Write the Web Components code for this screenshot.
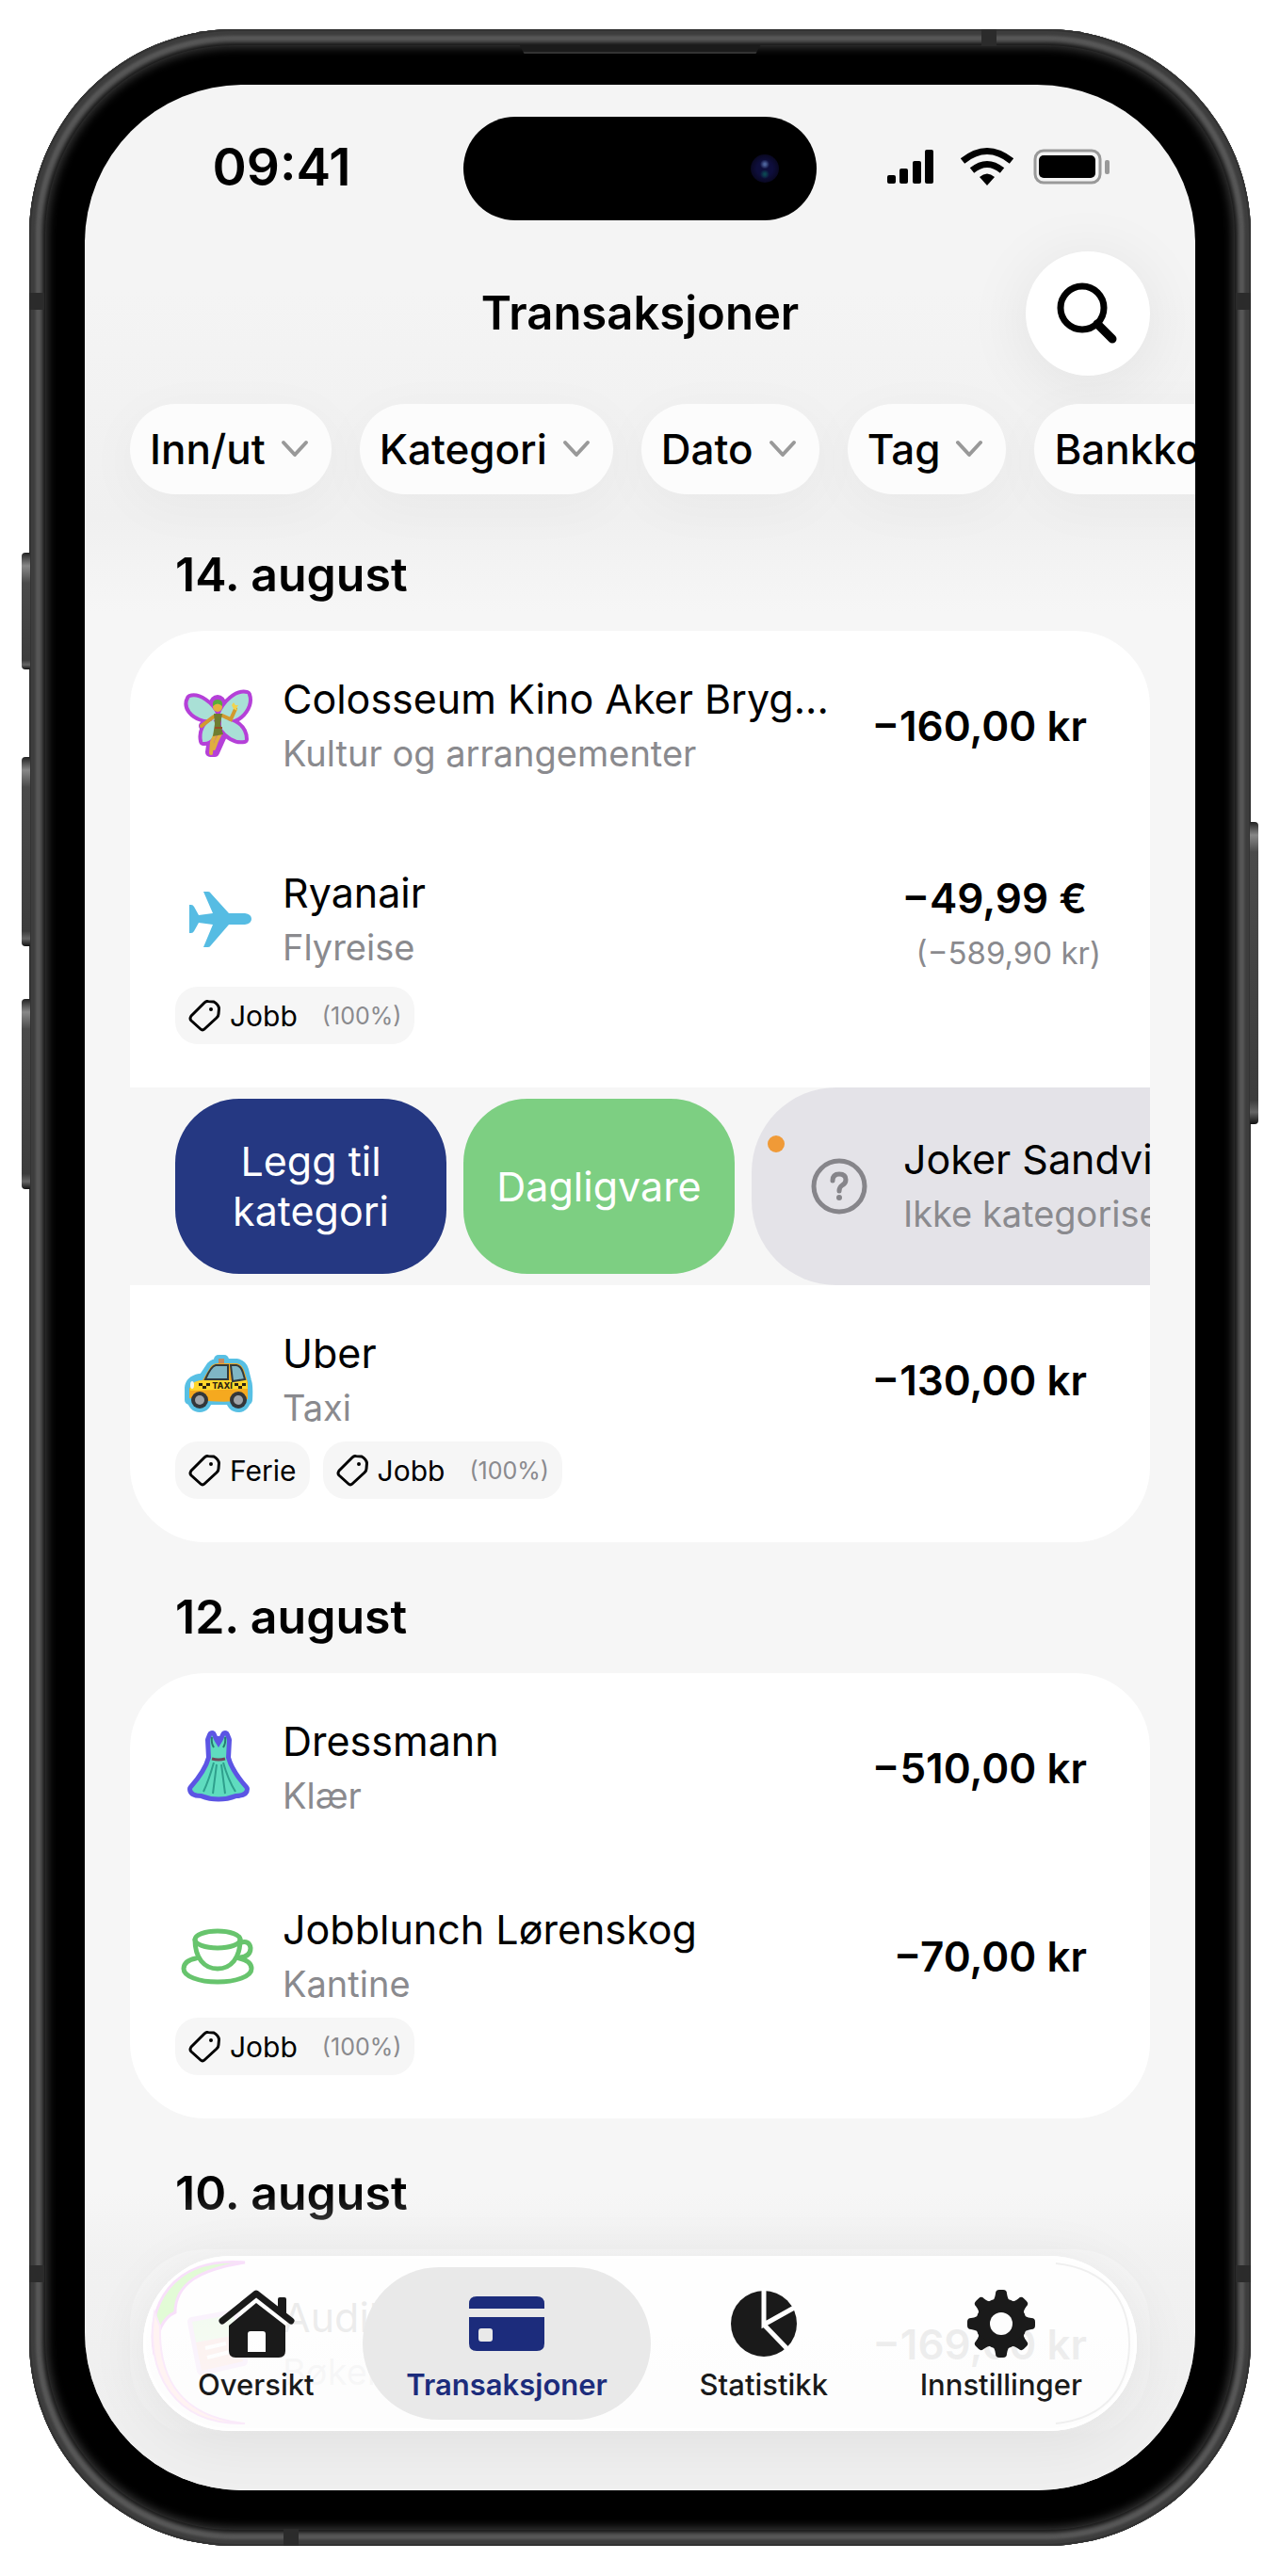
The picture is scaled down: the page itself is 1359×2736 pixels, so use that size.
<!DOCTYPE html>
<html lang="no">
<head>
<meta charset="utf-8">
<meta name="viewport" content="width=device-width, initial-scale=1">
<title>Transaksjoner</title>
<style>
	body {
		margin: 0;
		background: #fff;
		color: #000;
		font-family: Inter, "Liberation Sans", sans-serif;
	}
</style>
</head>
<body>
<phone-frame>
	<status-bar>09:41</status-bar>
	<nav-header>Transaksjoner</nav-header>
	<filter-bar>
		<filter-chip>Inn/ut</filter-chip>
		<filter-chip>Kategori</filter-chip>
		<filter-chip>Dato</filter-chip>
		<filter-chip>Tag</filter-chip>
		<filter-chip>Bankkonto</filter-chip>
	</filter-bar>

	<day-section day="14. august">
		<transaction-row icon="fairy" category="Kultur og arrangementer" amount="−160,00 kr">Colosseum Kino Aker Bryg...</transaction-row>
		<transaction-row icon="plane" category="Flyreise" amount="−49,99 €" converted="(−589,90 kr)">Ryanair
			<tag-chip slot="tags" share="(100%)">Jobb</tag-chip>
		</transaction-row>
		<swipe-row category="Ikke kategorisert">Joker Sandvika
			<swipe-action slot="actions" color="#253882">Legg til kategori</swipe-action>
			<swipe-action slot="actions" color="#7dcf82">Dagligvare</swipe-action>
		</swipe-row>
		<transaction-row icon="taxi" category="Taxi" amount="−130,00 kr">Uber
			<tag-chip slot="tags">Ferie</tag-chip>
			<tag-chip slot="tags" share="(100%)">Jobb</tag-chip>
		</transaction-row>
	</day-section>

	<day-section day="12. august">
		<transaction-row icon="dress" category="Klær" amount="−510,00 kr">Dressmann</transaction-row>
		<transaction-row icon="cup" category="Kantine" amount="−70,00 kr">Jobblunch Lørenskog
			<tag-chip slot="tags" share="(100%)">Jobb</tag-chip>
		</transaction-row>
	</day-section>

	<day-section day="10. august">
		<transaction-row icon="book" category="Bøker" amount="−169,00 kr">Audible</transaction-row>
	</day-section>

	<tab-bar slot="bar">
		<tab-item icon="house">Oversikt</tab-item>
		<tab-item icon="card" active>Transaksjoner</tab-item>
		<tab-item icon="pie">Statistikk</tab-item>
		<tab-item icon="gear">Innstillinger</tab-item>
	</tab-bar>
</phone-frame>

<script>
// sticker look: the silhouette is stroked first, then the drawing goes on top
const sticker = (color, silhouette, drawing) => `
	<g fill="${color}" stroke="${color}" stroke-width="10" stroke-linejoin="round" stroke-linecap="round">${silhouette}</g>
	${drawing}`;

const wings = `
	<path d="M39 31 C34 19 20 10 12 13 C7 22 15 31 27 34 L38 35Z"/>
	<path d="M44 31 C49 18 62 6 72 9 C76 20 66 33 55 35 L46 36Z"/>
	<path d="M36 37 C28 40 24 49 26 58 C34 59 38 49 40 42Z"/>
	<path d="M46 36 C58 37 69 44 69 56 C60 58 51 51 46 44Z"/>`;
const car = `<path d="M11 63 L11 50 Q12 42 22 40 L26 39 L34 27 Q37 24 42 24 L61 24 Q67 25 69 31 L72 43 Q74 46 73 63 Z"/>
	<rect x="42" y="20" width="6" height="5"/><circle cx="22" cy="63" r="8"/><circle cx="63" cy="63" r="8"/>`;
const gown = `<path d="M35 7 Q37 13 42 20 Q47 13 49 7 L51 12 L50 31 Q54 46 70 64 Q70 69 60 69 Q42 76 24 69 Q14 69 14 64 Q30 46 34 31 L33 12Z"/>`;

const icons = {
	fairy: sticker("#b540d8", wings + `<path d="M38 20 L45 20 L47 50 L38 70 L33 70 L36 48 Z"/><circle cx="41" cy="18" r="4"/><path d="M26 42 L36 36"/>`, `
		<g fill="#a9e0d6" stroke="#a9e0d6" stroke-width="2">${wings}</g>
		<path d="M37 32 L24 42 M46 31 L55 35 L60 24" fill="none" stroke="#d29a2e" stroke-width="4" stroke-linecap="round"/>
		<path d="M39 50 L35 59 L34 71 M44 50 L40 58 L37 66" fill="none" stroke="#e0ad3f" stroke-width="4" stroke-linecap="round"/>
		<path d="M37 29 L46 29 L44 40 L47 51 L36 53 L38 40 Z" fill="#6f7d31"/>
		<path d="M38 44 L46 44" stroke="#9a4d24" stroke-width="2"/>
		<circle cx="41" cy="22" r="5" fill="#e3b23f"/>
		<path d="M36 21 Q35 14 41 14 Q47 14 46 21 Q41 16 36 21Z" fill="#58ad3d"/>
		<path d="M58 17 l2 3 3 0 -2 3 1 3 -4 -2 -2 -4Z" fill="#f2d34c"/>`),
	plane: `<path fill="#56bce3" d="M26 12 L31 12 Q33 12 34 14 L53 35 L70 35 Q77 36 77 41 Q77 46 70 47 L53 47 L34 69 Q33 71 31 71 L26 71 L36 47 L21 45 L16 54 Q15 56 13 56 L11 56 L11 26 L13 26 Q15 26 16 28 L21 37 L36 35 Z"/>`,
	taxi: sticker("#58c0e4", car, `
		<rect x="42" y="19" width="6" height="5" fill="#c28a62"/>
		<path d="M11 61 L11 51 Q13 43 25 42 L34 27 Q37 24 42 24 L61 24 Q67 25 69 31 L73 44 L73 62 Q60 66 30 64Z" fill="#f5a91f"/>
		<path d="M12 49 Q15 42 26 42 L72 42 L73 51 L12 53Z" fill="#ffd62b"/>
		<path d="M28 41 Q34 27 39 26 L52 26 L52 41Z M55 26 L61 26 Q66 27 68 34 L70 41 L57 43Z" fill="#7fb6c5" stroke="#313a3e" stroke-width="2"/>
		<path d="M21 45h4v3h-4zM25 48h4v3h-4zM29 45h4v3h-4zM59 45h4v3h-4zM63 48h4v3h-4zM67 45h4v3h-4z" fill="#2c2412"/>
		<text x="46" y="51" text-anchor="middle" font-size="9" font-weight="800" fill="#2c2412">TAXI</text>
		<circle cx="22" cy="63" r="9" fill="#33363a"/><circle cx="63" cy="63" r="9" fill="#33363a"/>
		<circle cx="22" cy="63" r="5" fill="#a0a5aa"/><circle cx="63" cy="63" r="5" fill="#a0a5aa"/>
		<ellipse cx="14" cy="47" rx="2" ry="4" fill="#f6f6ee"/>`),
	dress: sticker("#5c55e4", gown, `
		<g fill="#5fdcbf">${gown}</g>
		<path d="M37 8 Q38 14 42 19 Q46 14 47 8Z" fill="#5c55e4"/>
		<path d="M35 9 Q34 15 37 20 M49 9 Q50 15 47 20" stroke="#267b70" stroke-width="2" fill="none"/>
		<path d="M35 32 Q42 34 49 32" stroke="#70485a" stroke-width="3" fill="none"/>
		<path d="M37 36 Q32 54 26 67 M40 38 L36 69 M45 38 L49 69 M47 36 Q52 54 60 67" stroke="#2fa08d" stroke-width="2" fill="none"/>`),
	cup: `<g fill="none" stroke="#67c46d" stroke-width="5" stroke-linecap="round">
		<ellipse cx="41" cy="24" rx="24" ry="9"/>
		<path d="M17 24 C17 44 27 55 41 55 C55 55 65 44 65 24"/>
		<path d="M66 27 Q75 25 76 33 Q76 42 65 43"/>
		<path d="M18 44 C8 46 5 50 5 55 C5 63 21 69 41 69 C61 69 77 63 77 55 C77 50 73 46 64 44"/></g>`,
	book: sticker("#c95fe8", `<path d="M14 18 L58 10 L68 60 L24 70Z"/>`, `
		<path d="M14 18 L58 10 L62 32 L18 40Z" fill="#6bd34a"/>
		<path d="M18 40 L62 32 L68 60 L24 70Z" fill="#e8543c"/>
		<path d="M28 46 L50 41 M30 56 L54 50" stroke="#fff" stroke-width="4"/>`),
	question: `<circle cx="42" cy="42" r="27" fill="none" stroke="#86858a" stroke-width="5"/>
		<path d="M35 36 Q35 29 42 29 Q49 29 49 35 Q49 39 45 41 Q42 43 42 47" fill="none" stroke="#86858a" stroke-width="5" stroke-linecap="round"/>
		<circle cx="42" cy="54" r="3" fill="#86858a"/>`,
	house: `<path d="M6 35 L42 6 L79 35" fill="none" stroke="currentColor" stroke-width="7" stroke-linecap="round" stroke-linejoin="round"/>
		<path d="M65 24 V12 Q65 10 67 10 H72 Q74 10 74 12 V31Z" fill="currentColor"/>
		<path fill-rule="evenodd" fill="currentColor" d="M42 16 L73 40 V67 Q73 74 66 74 H20 Q13 74 13 67 V40Z M33 68 H52 V49 Q52 46 49 46 H36 Q33 46 33 49Z"/>`,
	card: `<path d="M2 22 V17 Q2 9 10 9 H74 Q82 9 82 17 V22Z" fill="currentColor"/>
		<path fill-rule="evenodd" fill="currentColor" d="M2 31 H82 V59 Q82 67 74 67 H10 Q2 67 2 59Z M15 43 Q12 43 12 46 V54 Q12 57 15 57 H24 Q27 57 27 54 V46 Q27 43 24 43Z"/>`,
	pie: `<circle cx="42" cy="38" r="35" fill="currentColor"/>
		<path d="M42 0 V39 L76 20 M42 39 L69 67" fill="none" stroke="#fff" stroke-width="5"/>`,
	gear: `<g fill="currentColor"><circle cx="42" cy="38" r="27"/>
		${[0, 45, 90, 135, 180, 225, 270, 315].map(a => `<path d="M32 14 Q35 13 36 6 Q36 2 40 2 H44 Q48 2 48 6 Q49 13 52 14Z" transform="rotate(${a} 42 38)"/>`).join("")}</g>
		<circle cx="42" cy="38" r="12" fill="#fdfdfd"/>`,
};

const svg = (name, height = 84) =>
	`<svg width="84" height="${height}" viewBox="0 0 84 ${height}" aria-hidden="true">${icons[name] || ""}</svg>`;

// every element gets its shadow root filled once from render()
class BaseElement extends HTMLElement {
	constructor() {
		super();
		this.attachShadow({ mode: "open" });
	}
	connectedCallback() {
		this.shadowRoot.innerHTML = this.render();
	}
}

customElements.define("phone-frame", class extends BaseElement {
	render() {
		return `
		<style>
			:host { display: block; padding: 31px; }
			* { box-sizing: border-box; }
			.body {
				position: relative;
				height: calc(100vh - 63px);
				padding: 59px;
				border-radius: 218px;
				background: #000;
				box-shadow:
					inset 0 0 0 2px #333,
					inset 0 0 3px 7px #3d3d3d,
					inset 0 0 4px 14px #5a5a5a,
					inset 0 0 0 17px #161616,
					inset 0 0 10px 20px #343434;
			}
			.screen {
				position: relative;
				height: 100%;
				overflow: hidden;
				border-radius: 168px;
				background: linear-gradient(#f4f4f4, #f4f4f4 220px, #f0f0f0 460px, #f6f6f6 560px);
			}
			.key {
				position: absolute;
				width: 9px;
				left: -8px;
				border-radius: 4px 0 0 4px;
				background: linear-gradient(#222, #888 14px, #4a4a4a 32px, #3c3c3c 92%, #666 96%, #111);
			}
			.key.right { left: auto; right: -8px; border-radius: 0 4px 4px 0; }
			.band { position: absolute; background: #2b2b2b; width: 16px; height: 18px; }
			.ear {
				position: absolute; top: 17px; left: 50%; width: 256px; height: 9px; margin-left: -128px;
				background: #1b1b1b; border-bottom: 2px solid #333;
				clip-path: polygon(0 0, 100% 0, 98% 100%, 2% 100%);
			}
		</style>
		<div class="body">
			<i class="key" style="top:556px;height:124px"></i>
			<i class="key" style="top:773px;height:201px"></i>
			<i class="key" style="top:1030px;height:202px"></i>
			<i class="key right" style="top:842px;height:321px"></i>
			<i class="band" style="top:280px;left:0"></i>
			<i class="band" style="top:280px;right:0"></i>
			<i class="band" style="bottom:280px;left:0"></i>
			<i class="band" style="bottom:280px;right:0"></i>
			<i class="band" style="top:0;right:270px"></i>
			<i class="band" style="bottom:0;left:270px"></i>
			<i class="ear"></i>
			<main class="screen"><slot></slot><slot name="bar"></slot></main>
		</div>`;
	}
});

customElements.define("status-bar", class extends BaseElement {
	render() {
		return `
		<style>
			:host {
				display: grid;
				grid-template-columns: 1fr 375px 1fr;
				align-items: center;
				padding: 34px 0 33px;
			}
			time { justify-self: center; padding: 0 0 4px 16px; font-size: 55px; font-weight: 600; line-height: 60px; }
			.island {
				display: flex; align-items: center; justify-content: flex-end;
				height: 110px; border-radius: 55px; background: #000; padding-right: 40px; box-sizing: border-box;
			}
			.lens {
				width: 30px; height: 30px; border-radius: 50%;
				background: radial-gradient(circle at 50% 35%, #4d639c 0 1px, transparent 5px),
					radial-gradient(circle at 50% 70%, #0c4552 0 1px, transparent 5px),
					radial-gradient(#0e0e3c 40%, #0a0926 65%, #050510);
			}
			.icons { justify-self: center; padding: 0 14px 4px 0; display: flex; align-items: center; }
		</style>
		<time><slot></slot></time>
		<div class="island"><i class="lens"></i></div>
		<div class="icons">
			<svg width="238" height="42" viewBox="0 0 238 42" role="img" aria-label="Signal, Wi-Fi, batteri">
				<rect x="0" y="30" width="9" height="9" rx="2"/><rect x="13" y="23" width="9" height="16" rx="2"/>
				<rect x="27" y="15" width="9" height="24" rx="2"/><rect x="40" y="3" width="9" height="36" rx="2"/>
				<g fill="none" stroke="#000" stroke-width="7">
					<path d="M80 15 Q106 -6 132 15"/><path d="M90 25 Q106 12 122 25"/>
				</g>
				<path d="M98 32 Q106 25 114 32 L106 41Z"/>
				<rect x="157" y="4" width="69" height="34" rx="9" fill="none" stroke="#999" stroke-width="3"/>
				<rect x="161" y="9" width="60" height="24" rx="5"/>
				<rect x="231" y="14" width="5" height="15" rx="2" fill="#999"/>
			</svg>
		</div>`;
	}
});

customElements.define("nav-header", class extends BaseElement {
	render() {
		return `
		<style>
			:host { display: grid; grid-template-columns: 1fr auto 1fr; align-items: center; padding: 0 48px; }
			h1 { grid-column: 2; margin: 0; font-size: 49px; line-height: 60px; font-weight: 600; }
			button {
				justify-self: end; width: 132px; height: 132px; padding: 0; border: 0; border-radius: 50%;
				background: #fff; box-shadow: 0 8px 64px 8px rgba(0, 0, 0, .06);
				display: flex; align-items: center; justify-content: center;
			}
		</style>
		<h1><slot></slot></h1>
		<button aria-label="Søk">
			<svg width="66" height="66" viewBox="0 0 66 66" fill="none" stroke="#000" stroke-linecap="round">
				<circle cx="27" cy="27" r="23" stroke-width="7"/><path d="M43 44 L59 60" stroke-width="9"/>
			</svg>
		</button>`;
	}
});

customElements.define("filter-bar", class extends BaseElement {
	render() {
		return `
		<style>:host { display: flex; gap: 30px; padding: 30px 48px 6px; }</style>
		<slot></slot>`;
	}
});

customElements.define("filter-chip", class extends BaseElement {
	render() {
		return `
		<style>
			:host { display: block; flex: none; }
			button {
				display: flex; align-items: center; gap: 16px; height: 96px; padding: 0 24px 0 21px;
				border: 0; border-radius: 48px; background: #fcfcfc; color: #000;
				font: 500 44px/56px Inter, "Liberation Sans", sans-serif;
				box-shadow: 0 12px 56px 4px rgba(0, 0, 0, .03);
			}
		</style>
		<button aria-haspopup="menu"><slot></slot>
			<svg width="30" height="20" viewBox="0 0 30 20" fill="none" stroke="#999" stroke-width="4" stroke-linecap="round" stroke-linejoin="round" aria-hidden="true"><path d="M3 3 L15 16 L27 3"/></svg>
		</button>`;
	}
});

customElements.define("day-section", class extends BaseElement {
	render() {
		return `
		<style>
			:host { display: block; padding: 0 48px; }
			h2 { margin: 0; padding: 49px 48px 30px; font-size: 50px; line-height: 60px; font-weight: 600; }
			.card { background: #fff; border-radius: 80px; overflow: hidden; }
		</style>
		<section>
			<h2>${this.getAttribute("day")}</h2>
			<div class="card"><slot></slot></div>
		</section>`;
	}
});

const rowText = `
	.name, .category { white-space: nowrap; line-height: 58px; }
	.name { font-size: 43px; }
	.category { font-size: 38px; color: #8a8a8e; }`;

customElements.define("transaction-row", class extends BaseElement {
	render() {
		const converted = this.getAttribute("converted");
		const tagged = this.querySelector("[slot=tags]");
		return `
		<style>
			:host { display: block; padding: 43px 52px 41px 48px; }
			svg { flex: none; display: block; }
			.main { display: flex; align-items: center; gap: 26px; padding-left: 4px; }
			.text { flex: 1; min-width: 0; }
			${rowText}
			.money { text-align: right; white-space: nowrap; line-height: 58px; }
			.money.two { padding-top: 12px; }
			.amount { padding-right: 15px; font-size: 44px; font-weight: 600; }
			.converted { font-size: 33px; color: #8a8a8e; }
			.tags { display: flex; gap: 14px; padding: 7px 0 5px; }
		</style>
		<div class="main">
			${svg(this.getAttribute("icon"))}
			<div class="text">
				<div class="name"><slot></slot></div>
				<div class="category">${this.getAttribute("category")}</div>
			</div>
			<div class="money ${converted ? "two" : ""}">
				<div class="amount">${this.getAttribute("amount")}</div>
				${converted ? `<div class="converted">${converted}</div>` : ""}
			</div>
		</div>
		${tagged ? `<div class="tags"><slot name="tags"></slot></div>` : ""}`;
	}
});

customElements.define("tag-chip", class extends BaseElement {
	render() {
		const share = this.getAttribute("share");
		return `
		<style>
			:host {
				display: flex; align-items: center; height: 61px; padding: 0 14px; border-radius: 24px;
				background: #f6f6f6; font-size: 30px; font-weight: 400; line-height: 40px;
			}
			svg { margin-right: 10px; }
			small { margin-left: 26px; font-size: 25px; color: #8a8a8e; }
		</style>
		<svg width="34" height="34" viewBox="0 0 34 34" fill="none" stroke="#000" stroke-width="3" stroke-linejoin="round" aria-hidden="true">
			<path d="M17 3 Q19 1 21 1.500 L27 2 Q32 5 32.500 9 L32 15 Q32 17 30 19 L17 31 Q15 33 13 31 L3 22 Q1 20 3 17Z"/>
			<circle cx="24" cy="10" r="1" stroke-width="2"/>
		</svg>
		<slot></slot>${share ? `<small>${share}</small>` : ""}`;
	}
});

// a row that has been dragged to the right, so that its actions show
customElements.define("swipe-row", class extends BaseElement {
	render() {
		return `
		<style>
			:host { display: flex; height: 210px; padding-left: 48px; gap: 18px; background: #f6f6f6; overflow: hidden; align-items: center; }
			.row {
				position: relative; flex: 1 0 auto; display: flex; align-items: center; gap: 26px;
				height: 100%; padding-left: 51px; border-radius: 90px 0 0 90px; background: #e4e3e8;
			}
			.dot { position: absolute; left: 17px; top: 51px; width: 18px; height: 18px; border-radius: 50%; background: #f09a37; }
			${rowText}
		</style>
		<slot name="actions"></slot>
		<div class="row">
			<i class="dot"></i>
			${svg("question")}
			<div>
				<div class="name"><slot></slot></div>
				<div class="category">${this.getAttribute("category")}</div>
			</div>
		</div>`;
	}
});

customElements.define("swipe-action", class extends BaseElement {
	render() {
		return `
		<style>
			:host { display: block; flex: none; }
			button {
				width: 288px; height: 186px; padding: 0 20px; border: 0; border-radius: 68px;
				background: ${this.getAttribute("color")}; color: #fff;
				font: 400 43px/53px Inter, "Liberation Sans", sans-serif;
			}
		</style>
		<button><slot></slot></button>`;
	}
});

customElements.define("tab-bar", class extends BaseElement {
	render() {
		return `
		<style>
			:host {
				position: absolute; left: 0; right: 0; bottom: 0; padding: 67px 62px 63px;
				background: linear-gradient(rgba(240, 240, 240, 0), rgba(237, 237, 237, .5) 67px, rgba(236, 236, 236, .7) 250px, #efefef 256px);
			}
			nav {
				position: relative; display: flex; justify-content: space-between; padding: 12px; border-radius: 93px;
				background: rgba(255, 255, 255, .84);
				box-shadow: inset 0 0 0 3px #fff, 0 8px 56px 8px rgba(0, 0, 0, .06);
			}
			.glint { position: absolute; left: 0; top: 0; }
			.rim { position: absolute; right: 0; top: 0; }
		</style>
		<nav>
			<svg class="glint" width="120" height="186" viewBox="0 0 120 186" fill="none" aria-hidden="true">
				<path d="M108 7 C30 0 2 55 12 105 C14 80 22 65 34 60 C34 30 60 14 108 7Z" fill="#e2fbd6" stroke="#f8e0fa" stroke-width="3"/>
				<path d="M12 60 C2 120 30 180 108 178 C50 172 16 140 18 75Z" fill="#fff3f2" stroke="#faeafa" stroke-width="2"/>
			</svg>
			<svg class="rim" width="100" height="186" viewBox="0 0 100 186" fill="none" stroke="#efefef" stroke-width="2" aria-hidden="true">
				<path d="M14 8 C70 14 92 50 92 93 C92 136 70 172 14 178"/>
			</svg>
			<slot></slot>
		</nav>`;
	}
});

customElements.define("tab-item", class extends BaseElement {
	render() {
		const active = this.hasAttribute("active");
		return `
		<style>
			:host { display: block; position: relative; }
			a {
				display: flex; flex-direction: column; align-items: center; gap: 9px; padding: 22px 46px 19px;
				border-radius: 81px; color: ${active ? "#1c2c7c" : "#1a1a1a"}; background: ${active ? "#e9e9e9" : "none"};
				font-size: 31px; line-height: 36px; font-weight: ${active ? 600 : 500}; text-decoration: none;
			}
			svg { display: block; }
		</style>
		<a href="#" ${active ? 'aria-current="page"' : ""}>${svg(this.getAttribute("icon"), 76)}<span><slot></slot></span></a>`;
	}
});
</script>
</body>
</html>
